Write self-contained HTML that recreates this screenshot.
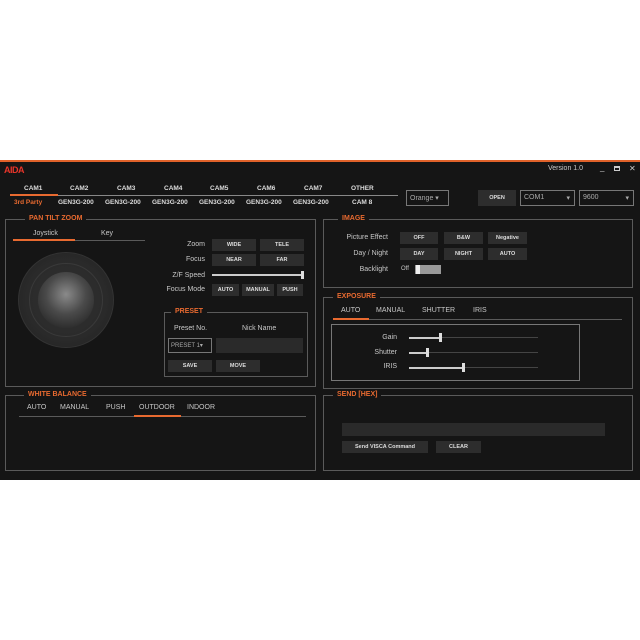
<!DOCTYPE html><html><head><style>
*{margin:0;padding:0;box-sizing:border-box}
body{width:640px;height:640px;background:#fff;position:relative;font-family:"Liberation Sans",sans-serif;overflow:hidden}
#w{position:absolute;left:0;top:160px;width:640px;height:320px;background:#151515;border-top:2px solid #e0622a}
.a{position:absolute;white-space:nowrap}
.t{font-size:7px;color:#c8c8c8}
.b{font-size:6px;color:#ddd;font-weight:bold}
.o{color:#e86a30;font-weight:bold;font-size:7px}
.btn{position:absolute;background:#2d2d2d;color:#ddd;font-size:5.5px;font-weight:bold;text-align:center}
.box{position:absolute;border:1px solid #5a5a5a}
.ttl{position:absolute;background:#151515;padding:0 4px;color:#e86a30;font-weight:bold;font-size:7px;top:-5px}
.line{position:absolute;height:1px;background:#5a5a5a}
.ol{position:absolute;height:2px;background:#e86a30}
.r{text-align:right}
.dd{position:absolute;border:1px solid #777;color:#aaa;font-size:7px;padding:3px 3px}
</style></head><body>
<div id="w"></div>
<div class="a" style="left:4px;top:165px;color:#e8352a;font-weight:bold;font-size:9px;letter-spacing:-0.5px">AIDA</div>
<div class="a t" style="left:548px;top:165px">Version 1.0</div>
<div class="a t" style="left:600px;top:163px;font-size:8px">_</div>
<div class="a" style="left:614px;top:166px;width:6px;height:5px;border:1px solid #ccc;border-top-width:2px"></div>
<div class="a t" style="left:629px;top:164px;font-size:8px">✕</div>
<!-- cam tabs -->
<div class="a b" style="left:24px;top:185px;font-size:6.5px">CAM1</div>
<div class="a b" style="left:70px;top:185px;font-size:6.5px">CAM2</div>
<div class="a b" style="left:117px;top:185px;font-size:6.5px">CAM3</div>
<div class="a b" style="left:164px;top:185px;font-size:6.5px">CAM4</div>
<div class="a b" style="left:210px;top:185px;font-size:6.5px">CAM5</div>
<div class="a b" style="left:257px;top:185px;font-size:6.5px">CAM6</div>
<div class="a b" style="left:304px;top:185px;font-size:6.5px">CAM7</div>
<div class="a b" style="left:351px;top:185px;font-size:6.5px">OTHER</div>
<div class="line" style="left:10px;top:195px;width:388px;background:#888"></div>
<div class="ol" style="left:10px;top:194px;width:48px"></div>
<div class="a o" style="left:14px;top:199px;font-size:6.5px">3rd Party</div>
<div class="a b" style="left:58px;top:199px;font-size:6.5px">GEN3G-200</div>
<div class="a b" style="left:105px;top:199px;font-size:6.5px">GEN3G-200</div>
<div class="a b" style="left:152px;top:199px;font-size:6.5px">GEN3G-200</div>
<div class="a b" style="left:199px;top:199px;font-size:6.5px">GEN3G-200</div>
<div class="a b" style="left:246px;top:199px;font-size:6.5px">GEN3G-200</div>
<div class="a b" style="left:293px;top:199px;font-size:6.5px">GEN3G-200</div>
<div class="a b" style="left:352px;top:199px;font-size:6.5px">CAM 8</div>
<div class="dd" style="left:406px;top:190px;width:43px;height:16px">Orange ▾</div>
<div class="btn" style="left:478px;top:190px;width:38px;height:16px;line-height:16px">OPEN</div>
<div class="dd" style="left:520px;top:190px;width:55px;height:16px">COM1<span style="position:absolute;right:4px">▾</span></div>
<div class="dd" style="left:579px;top:190px;width:55px;height:16px">9600<span style="position:absolute;right:4px">▾</span></div>
<!-- PTZ -->
<div class="box" style="left:5px;top:219px;width:311px;height:168px"><div class="ttl" style="left:19px">PAN TILT ZOOM</div></div>
<div class="a t" style="left:33px;top:230px">Joystick</div>
<div class="a t" style="left:101px;top:230px">Key</div>
<div class="line" style="left:13px;top:240px;width:132px"></div>
<div class="ol" style="left:13px;top:239px;width:62px"></div>
<div class="a" style="left:18px;top:252px;width:96px;height:96px;border-radius:50%;background:radial-gradient(circle,#333 0,#2a2a2a 60%,#1f1f1f 100%);border:1px solid #333"></div>
<div class="a" style="left:29px;top:263px;width:74px;height:74px;border-radius:50%;border:1px solid #3a3a3a"></div>
<div class="a" style="left:38px;top:272px;width:56px;height:56px;border-radius:50%;background:radial-gradient(circle at 50% 40%,#8a8a8a 0,#4a4a4a 45%,#1a1a1a 100%)"></div>
<div class="a t r" style="left:150px;top:241px;width:55px">Zoom</div>
<div class="a t r" style="left:150px;top:256px;width:55px">Focus</div>
<div class="a t r" style="left:150px;top:272px;width:55px">Z/F Speed</div>
<div class="a t r" style="left:150px;top:286px;width:55px">Focus Mode</div>
<div class="btn" style="left:212px;top:239px;width:44px;height:12px;line-height:12px">WIDE</div>
<div class="btn" style="left:260px;top:239px;width:44px;height:12px;line-height:12px">TELE</div>
<div class="btn" style="left:212px;top:254px;width:44px;height:12px;line-height:12px">NEAR</div>
<div class="btn" style="left:260px;top:254px;width:44px;height:12px;line-height:12px">FAR</div>
<div class="a" style="left:212px;top:274px;width:91px;height:2px;background:#ccc"></div>
<div class="a" style="left:301px;top:271px;width:3px;height:8px;background:#ddd"></div>
<div class="btn" style="left:212px;top:284px;width:27px;height:12px;line-height:12px">AUTO</div>
<div class="btn" style="left:242px;top:284px;width:32px;height:12px;line-height:12px">MANUAL</div>
<div class="btn" style="left:277px;top:284px;width:26px;height:12px;line-height:12px">PUSH</div>
<div class="box" style="left:164px;top:312px;width:144px;height:65px"><div class="ttl" style="left:6px">PRESET</div></div>
<div class="a t" style="left:174px;top:325px">Preset No.</div>
<div class="a t" style="left:242px;top:325px">Nick Name</div>
<div class="dd" style="left:168px;top:338px;width:44px;height:15px;font-size:6px;padding:3px 2px">PRESET 1▾</div>
<div class="a" style="left:216px;top:338px;width:87px;height:15px;background:#2a2a2a"></div>
<div class="btn" style="left:168px;top:360px;width:44px;height:12px;line-height:12px">SAVE</div>
<div class="btn" style="left:216px;top:360px;width:44px;height:12px;line-height:12px">MOVE</div>
<!-- WB -->
<div class="box" style="left:5px;top:395px;width:311px;height:76px"><div class="ttl" style="left:18px">WHITE BALANCE</div></div>
<div class="a t" style="left:27px;top:404px">AUTO</div>
<div class="a t" style="left:60px;top:404px">MANUAL</div>
<div class="a t" style="left:106px;top:404px">PUSH</div>
<div class="a t" style="left:139px;top:404px">OUTDOOR</div>
<div class="a t" style="left:187px;top:404px">INDOOR</div>
<div class="line" style="left:19px;top:416px;width:287px"></div>
<div class="ol" style="left:134px;top:415px;width:47px"></div>
<!-- IMAGE -->
<div class="box" style="left:323px;top:219px;width:310px;height:69px"><div class="ttl" style="left:14px">IMAGE</div></div>
<div class="a t r" style="left:320px;top:234px;width:68px">Picture Effect</div>
<div class="a t r" style="left:320px;top:250px;width:68px">Day / Night</div>
<div class="a t r" style="left:320px;top:266px;width:68px">Backlight</div>
<div class="btn" style="left:400px;top:232px;width:38px;height:12px;line-height:12px">OFF</div>
<div class="btn" style="left:444px;top:232px;width:39px;height:12px;line-height:12px">B&amp;W</div>
<div class="btn" style="left:488px;top:232px;width:39px;height:12px;line-height:12px">Negative</div>
<div class="btn" style="left:400px;top:248px;width:38px;height:12px;line-height:12px">DAY</div>
<div class="btn" style="left:444px;top:248px;width:39px;height:12px;line-height:12px">NIGHT</div>
<div class="btn" style="left:488px;top:248px;width:39px;height:12px;line-height:12px">AUTO</div>
<div class="a t" style="left:401px;top:266px;font-size:6px">Off</div>
<div class="a" style="left:415px;top:265px;width:26px;height:9px;background:#999"></div>
<div class="a" style="left:416px;top:265px;width:4px;height:9px;background:#eee"></div>
<!-- EXPOSURE -->
<div class="box" style="left:323px;top:297px;width:310px;height:92px"><div class="ttl" style="left:9px">EXPOSURE</div></div>
<div class="a t" style="left:341px;top:307px">AUTO</div>
<div class="a t" style="left:376px;top:307px">MANUAL</div>
<div class="a t" style="left:422px;top:307px">SHUTTER</div>
<div class="a t" style="left:473px;top:307px">IRIS</div>
<div class="line" style="left:333px;top:319px;width:289px"></div>
<div class="ol" style="left:333px;top:318px;width:36px"></div>
<div class="box" style="left:331px;top:324px;width:249px;height:57px;border-color:#777"></div>
<div class="a t r" style="left:340px;top:334px;width:57px">Gain</div>
<div class="a t r" style="left:340px;top:349px;width:57px">Shutter</div>
<div class="a t r" style="left:340px;top:363px;width:57px">IRIS</div>
<div class="a" style="left:409px;top:337px;width:129px;height:1px;background:#444"></div>
<div class="a" style="left:409px;top:337px;width:31px;height:2px;background:#ccc"></div>
<div class="a" style="left:439px;top:333px;width:3px;height:9px;background:#ddd"></div>
<div class="a" style="left:409px;top:352px;width:129px;height:1px;background:#444"></div>
<div class="a" style="left:409px;top:352px;width:18px;height:2px;background:#ccc"></div>
<div class="a" style="left:426px;top:348px;width:3px;height:9px;background:#ddd"></div>
<div class="a" style="left:409px;top:367px;width:129px;height:1px;background:#444"></div>
<div class="a" style="left:409px;top:367px;width:54px;height:2px;background:#ccc"></div>
<div class="a" style="left:462px;top:363px;width:3px;height:9px;background:#ddd"></div>
<!-- SEND -->
<div class="box" style="left:323px;top:395px;width:310px;height:76px"><div class="ttl" style="left:9px">SEND [HEX]</div></div>
<div class="a" style="left:342px;top:423px;width:263px;height:13px;background:#2a2a2a"></div>
<div class="btn" style="left:342px;top:441px;width:86px;height:12px;line-height:12px">Send VISCA Command</div>
<div class="btn" style="left:436px;top:441px;width:45px;height:12px;line-height:12px">CLEAR</div>
</body></html>
